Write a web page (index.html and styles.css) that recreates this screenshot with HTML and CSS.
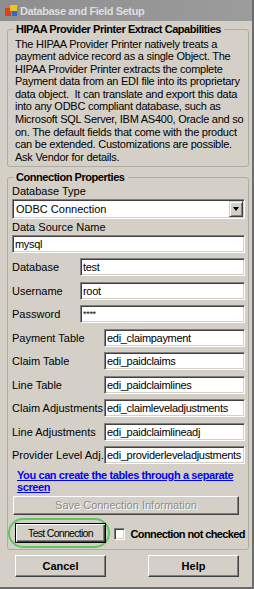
FILE: index.html
```html
<!DOCTYPE html>
<html lang="en">
<head>
    <meta charset="UTF-8">
    <meta name="viewport" content="width=device-width, initial-scale=1.0">
    <title>Database and Field Setup</title>
    <link rel="stylesheet" href="styles.css">
</head>
<body>
    <div class="window">
        <div class="titlebar">
            <svg class="app-icon" width="12" height="11" viewBox="0 0 12 11">
                <rect x="0" y="3" width="6" height="8" fill="#d8421e"/>
                <rect x="5" y="0" width="7" height="6" fill="#f4c21c"/>
                <rect x="7" y="6" width="5" height="5" fill="#2e6ad2"/>
            </svg>
            <span class="title">Database and Field Setup</span>
        </div>

        <div class="client">
            <fieldset class="group info">
                <legend>HIPAA Provider Printer Extract Capabilities</legend>
                <p>The HIPAA Provider Printer natively treats a<br>
                payment advice record as a single Object. The<br>
                HIPAA Provider Printer extracts the complete<br>
                Payment data from an EDI file into its proprietary<br>
                data object.&nbsp; It can translate and export this data<br>
                into any ODBC compliant database, such as<br>
                Microsoft SQL Server, IBM AS400, Oracle and so<br>
                on. The default fields that come with the product<br>
                can be extended. Customizations are possible.<br>
                Ask Vendor for details.</p>
            </fieldset>

            <fieldset class="group conn">
                <legend>Connection Properties</legend>

                <div class="label">Database Type</div>
                <div class="combo">
                    <span class="combo-text">ODBC Connection</span>
                    <span class="drop"><span class="arrow"></span></span>
                </div>

                <div class="label dsn">Data Source Name</div>
                <input class="textbox" type="text" value="mysql">

                <div class="row short"><span class="lbl">Database</span><input class="textbox" type="text" value="test"></div>
                <div class="row short"><span class="lbl">Username</span><input class="textbox" type="text" value="root"></div>
                <div class="row short"><span class="lbl">Password</span><input class="textbox pw" type="text" value="****"></div>
                <div class="row wide"><span class="lbl">Payment Table</span><input class="textbox" type="text" value="edi_claimpayment"></div>
                <div class="row wide"><span class="lbl">Claim Table</span><input class="textbox" type="text" value="edi_paidclaims"></div>
                <div class="row wide"><span class="lbl">Line Table</span><input class="textbox" type="text" value="edi_paidclaimlines"></div>
                <div class="row wide"><span class="lbl">Claim Adjustments</span><input class="textbox" type="text" value="edi_claimleveladjustments"></div>
                <div class="row wide"><span class="lbl">Line Adjustments</span><input class="textbox" type="text" value="edi_paidclaimlineadj"></div>
                <div class="row wide"><span class="lbl">Provider Level Adj.</span><input class="textbox" type="text" value="edi_providerleveladjustments"></div>

                <a class="link" href="#">You can create the tables through a separate screen</a>

                <button class="btn save" disabled>Save Connection Information</button>

                <div class="test-row">
                    <span class="highlight"><button class="btn default">Test Connection</button></span>
                    <span class="checkbox"></span>
                    <span class="check-label">Connection not checked</span>
                </div>
            </fieldset>

            <div class="footer">
                <button class="btn big">Cancel</button>
                <button class="btn big">Help</button>
            </div>
        </div>
    </div>
</body>
</html>
```

FILE: styles.css
```css
* {
    box-sizing: border-box;
}
body {
    margin: 0;
    background: #d4d0c8;
    font-family: "Liberation Sans", Arial, sans-serif;
    font-size: 11px;
    color: #000;
}
.window {
    width: 254px;
    height: 589px;
    background: #d4d0c8;
    border-right: 2px solid #6c6c6c;
    border-bottom: 2px solid #6c6c6c;
}
.titlebar {
    height: 21px;
    display: flex;
    align-items: center;
    gap: 3px;
    padding-left: 5px;
    background: linear-gradient(to right, #8e8e8e, #9c9c9c);
}
.title {
    font-weight: bold;
    color: #dedede;
    letter-spacing: -0.4px;
}
.client {
    padding: 0 3px 0 7px;
}
.group {
    margin: 0;
    min-width: 0;
    border: 1px solid #aeaba3;
    border-radius: 3px;
}
.group legend {
    font-weight: bold;
    line-height: 13px;
    padding: 0 3px;
    letter-spacing: -0.45px;
}
.info {
    margin-top: 1.5px;
    padding: 2px 4px 3px 7px;
}
.info legend {
    margin-left: -2px;
}
.info p {
    margin: 0;
    line-height: 12.6px;
    letter-spacing: -0.25px;
}
.conn {
    margin-top: 3.5px;
    padding: 0 3px 1px 4px;
}
.conn legend {
    margin-left: 1px;
}
.label {
    line-height: 13px;
    margin-top: 1px;
}
.label.dsn {
    margin-top: 2px;
}
.combo {
    display: flex;
    align-items: stretch;
    height: 20px;
    margin-top: 1px;
    background: #fff;
    border: 1px solid;
    border-color: #808080 #fff #fff #808080;
    box-shadow: inset 1px 1px 0 #404040, inset -1px -1px 0 #d4d0c8;
}
.combo-text {
    flex: 1;
    padding-left: 3px;
    line-height: 18px;
}
.drop {
    width: 14px;
    margin: 1px 1px 1px 0;
    display: flex;
    align-items: center;
    justify-content: center;
    background: #d4d0c8;
    border: 1px solid;
    border-color: #d4d0c8 #404040 #404040 #d4d0c8;
    box-shadow: inset 1px 1px 0 #fff, inset -1px -1px 0 #808080;
}
.arrow {
    width: 0;
    height: 0;
    border-left: 3.5px solid transparent;
    border-right: 3.5px solid transparent;
    border-top: 4px solid #000;
}
.textbox {
    display: block;
    width: 100%;
    height: 18px;
    margin: 1px 0 0;
    padding: 0 2px;
    font-family: inherit;
    font-size: 11px;
    letter-spacing: -0.3px;
    color: #000;
    background: #fff;
    border: 1px solid;
    border-color: #808080 #fff #fff #808080;
    box-shadow: inset 1px 1px 0 #404040, inset -1px -1px 0 #d4d0c8;
    outline: none;
}
.textbox.pw {
    font-size: 9px;
}
.row {
    display: flex;
    align-items: center;
    height: 18px;
    margin-top: 5.5px;
}
.row .lbl {
    flex: none;
    white-space: nowrap;
}
.row.short .lbl {
    width: 68px;
}
.row.wide .lbl {
    width: 92px;
}
.row .textbox {
    flex: 1;
    min-width: 0;
    margin: 0;
}
.link {
    display: block;
    margin: 4.5px 0 0 5px;
    line-height: 12px;
    font-weight: bold;
    color: #0000ff;
    letter-spacing: -0.4px;
}
.btn {
    padding: 0;
    font-family: inherit;
    font-size: 11px;
    color: #000;
    background: #d4d0c8;
    border: 1px solid;
    border-color: #fff #404040 #404040 #fff;
    box-shadow: inset -1px -1px 0 #808080;
}
.btn.save {
    display: block;
    width: 226px;
    height: 19px;
    margin: 3px 0 0 1px;
    color: #8c8c8c;
    text-shadow: 1px 1px 0 #fff;
}
.test-row {
    display: flex;
    align-items: center;
    margin: 3px 0 0 -4px;
}
.highlight {
    display: flex;
    padding: 3px 2px 3px 5px;
    border: 2px solid #5ec85e;
    border-radius: 16px;
}
.btn.default {
    width: 91px;
    height: 20px;
    font-size: 10.5px;
    letter-spacing: -0.7px;
    border-color: #000;
    box-shadow: inset 1px 1px 0 #fff, inset -1px -1px 0 #404040, inset -2px -2px 0 #808080;
}
.checkbox {
    width: 12px;
    height: 12px;
    margin: 2px 0 0 4px;
    background: #fff;
    border: 1px solid;
    border-color: #808080 #fff #fff #808080;
    box-shadow: inset 1px 1px 0 #404040, inset -1px -1px 0 #d4d0c8;
}
.check-label {
    margin: 2px 0 0 5px;
    font-weight: bold;
    letter-spacing: -0.6px;
    white-space: nowrap;
}
.footer {
    display: flex;
    gap: 42px;
    margin-top: 5.5px;
    padding-left: 8px;
}
.btn.big {
    width: 91px;
    height: 22px;
    font-weight: bold;
}
```
